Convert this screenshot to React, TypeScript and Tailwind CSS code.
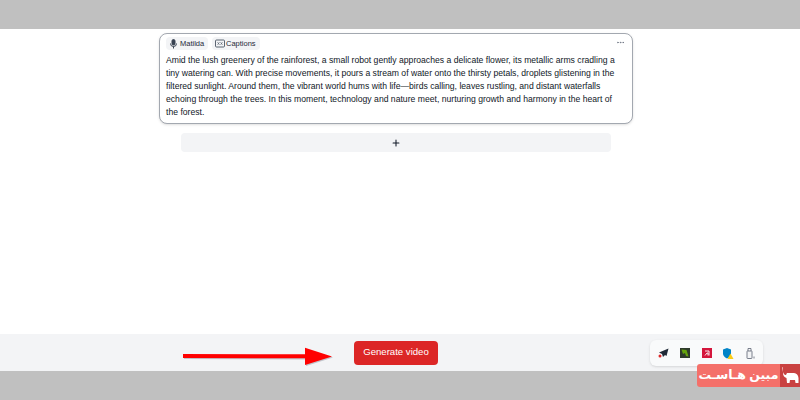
import { Plus, Ellipsis } from 'lucide-react'

const FONT = "font-['Liberation_Sans',Arial,sans-serif]"

function MicIcon() {
  return (
    <svg width="9" height="10" viewBox="0 0 9 10" fill="none" stroke="#374151" strokeWidth="1">
      <rect x="3" y="0.5" width="3" height="5.5" rx="1.5" fill="#374151" />
      <path d="M1.5 4.5 Q1.5 7.5 4.5 7.5 Q7.5 7.5 7.5 4.5 M4.5 7.5 V9.5" />
    </svg>
  )
}

function CaptionsIcon() {
  return (
    <svg width="10" height="9" viewBox="0 0 10 9" fill="none" stroke="#4b5563" strokeWidth="0.9">
      <rect x="0.5" y="1" width="9" height="7" rx="1" />
      <path d="M2.5 3.2 L4.5 5.8 M4.5 3.2 L2.5 5.8 M5.5 3.2 L7.5 5.8 M7.5 3.2 L5.5 5.8" strokeWidth="0.6" />
    </svg>
  )
}

function TrayIcons() {
  return (
    <div className="flex items-center justify-between w-[113px] h-[26px] px-[7px] bg-[#f9fafb] rounded-md shadow-sm">
      <span className="w-[12px] flex justify-center">
        <svg width="11" height="10" viewBox="0 0 11 10">
          <path d="M10.5 0.5 L1 4.5 L4 6 L5 9 L7 7 L8.5 8 Z" fill="#1f2937" />
          <circle cx="2" cy="8" r="1.5" fill="#dc2626" />
        </svg>
      </span>
      <span className="w-[12px] flex justify-center">
        <svg width="10" height="10" viewBox="0 0 10 10">
          <rect width="10" height="10" fill="#2f3a2c" />
          <path d="M1.5 1.5 L6.5 2 L8.5 8.5 L6 8 L5 5 L3 6 Z" fill="#65a30d" />
        </svg>
      </span>
      <span className="w-[12px] flex justify-center">
        <svg width="10" height="10" viewBox="0 0 10 10">
          <rect width="10" height="10" fill="#d4163c" />
          <path d="M3 3 H7 V7.5 M5 5 H6 V7.5 M3 7.5 L5 5" stroke="#fff" strokeWidth="0.9" fill="none" />
        </svg>
      </span>
      <span className="w-[12px] flex justify-center">
        <svg width="12" height="11" viewBox="0 0 12 11">
          <path d="M1 1.5 L5 0 L9 1.5 V5.5 Q9 8.5 5 10.5 Q1 8.5 1 5.5 Z" fill="#0284c7" />
          <path d="M8.5 5.5 L11.5 11 H5.5 Z" fill="#facc15" />
        </svg>
      </span>
      <span className="w-[12px] flex justify-center">
        <svg width="9" height="11" viewBox="0 0 9 11" fill="none" stroke="#6b7280" strokeWidth="0.9">
          <rect x="1" y="3" width="5" height="7.5" rx="0.5" fill="#f3f4f6" />
          <path d="M2 3 V0.5 H5 V3" />
          <path d="M8 8.5 V10.5" />
        </svg>
      </span>
    </div>
  )
}

export default function App() {
  return (
    <div className={`${FONT} w-[800px] h-[400px] flex flex-col bg-[#c0c0c0] overflow-hidden`}>
      <div className="h-[29px] shrink-0" />

      <main className="h-[305px] shrink-0 bg-white flex flex-col items-center pt-[4px] pr-2">
        <div className="w-[474px] h-[91px] shrink-0 border border-[#a3a8b0] rounded-lg bg-white px-[6px] pt-[3px] shadow-sm">
          <div className="flex items-center justify-between">
            <div className="flex items-center gap-[4px]">
              <span className="flex items-center gap-[2px] w-[42px] h-[13px] pl-[3px] rounded bg-[#f3f4f6] text-[7.5px] text-[#1f2937]">
                <MicIcon />
                Matilda
              </span>
              <span className="flex items-center gap-[1px] w-[48px] h-[13px] pl-[3px] rounded bg-[#f3f4f6] text-[7.5px] text-[#1f2937]">
                <CaptionsIcon />
                Captions
              </span>
            </div>
            <Ellipsis size={9} className="text-[#6b7280] mr-[1px] -mt-[3px]" />
          </div>
          <p className="mt-[4px] text-[8.65px] leading-[13px] text-[#111827]">
            Amid the lush greenery of the rainforest, a small robot gently approaches a delicate flower, its metallic arms cradling a
            tiny watering can. With precise movements, it pours a stream of water onto the thirsty petals, droplets glistening in the
            filtered sunlight. Around them, the vibrant world hums with life—birds calling, leaves rustling, and distant waterfalls
            echoing through the trees. In this moment, technology and nature meet, nurturing growth and harmony in the heart of
            the forest.
          </p>
        </div>

        <button className="mt-[9px] w-[430px] h-[19px] shrink-0 rounded bg-[#f3f4f6] flex items-center justify-center text-[#111827]">
          <Plus size={10} strokeWidth={2.5} />
        </button>
      </main>

      <footer className="relative h-[37px] shrink-0 bg-[#f3f4f6] flex items-center">
        <svg width="155" height="37" viewBox="0 0 155 37" className="ml-[182px] shrink-0">
          <path d="M2 21 L124 21.5 L124 15 L151 23.5 L124 32 L124 25.5 L2 25 Z" fill="#9ca3af" opacity="0.6" />
          <path d="M1 20 L123 20.3 L123 13.7 L150 22.5 L123 31 L123 24.3 L1 24 Z" fill="#ff0000" />
        </svg>
        <button className="ml-[17px] h-[24px] w-[84px] rounded bg-[#dc2626] text-white text-[9.6px] flex items-center justify-center">
          Generate video
        </button>
        <div className="absolute left-[650px] top-[6px]">
          <TrayIcons />
        </div>
      </footer>

      <div className="relative flex-1">
        <div className="absolute left-[697px] top-[-7px] w-[103px] h-[23px] flex rounded-l-[3px] overflow-hidden">
          <div dir="rtl" className="flex-1 bg-[#f4706a] text-white text-[12.5px] font-bold whitespace-nowrap flex items-center justify-center font-['Noto_Sans','DejaVu_Sans',sans-serif]">
            مبین هـاسـت
          </div>
          <div className="relative z-10 w-[20px] bg-[#c94141] flex items-center justify-center">
            <svg width="20" height="23" viewBox="0 0 20 23" fill="#fff">
              <path d="M3 3 Q2 3 2.5 5 Q3 11 6 11 L7 9 H14 Q18 9.5 18.5 14 V19 H15.5 L15 16 H10 L9.5 19 H7 L6.5 14 Q3 13 3 9 Z" />
            </svg>
          </div>
        </div>
      </div>
    </div>
  )
}
